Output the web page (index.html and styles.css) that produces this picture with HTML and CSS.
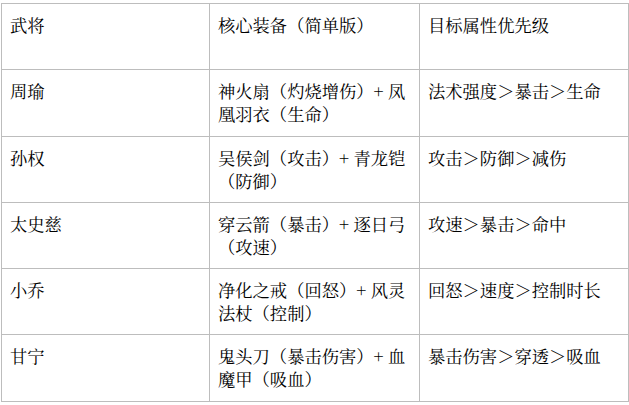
FILE: index.html
```html
<!DOCTYPE html>
<html lang="zh-CN">
<head>
<meta charset="utf-8">
<title>武将装备</title>
<link rel="stylesheet" href="styles.css">
</head>
<body>
<table class="gear">
  <colgroup>
    <col class="c1"><col class="c2"><col class="c3">
  </colgroup>
  <tr><td>武将</td><td>核心装备（简单版）</td><td>目标属性优先级</td></tr>
  <tr><td>周瑜</td><td>神火扇（灼烧增伤）+ 凤凰羽衣（生命）</td><td>法术强度＞暴击＞生命</td></tr>
  <tr><td>孙权</td><td>吴侯剑（攻击）+ 青龙铠（防御）</td><td>攻击＞防御＞减伤</td></tr>
  <tr><td>太史慈</td><td>穿云箭（暴击）+ 逐日弓（攻速）</td><td>攻速＞暴击＞命中</td></tr>
  <tr><td>小乔</td><td>净化之戒（回怒）+ 风灵法杖（控制）</td><td>回怒＞速度＞控制时长</td></tr>
  <tr><td>甘宁</td><td>鬼头刀（暴击伤害）+ 血魔甲（吸血）</td><td>暴击伤害＞穿透＞吸血</td></tr>
</table>
</body>
</html>
```
FILE: styles.css
```css
html, body {
  margin: 0;
  padding: 0;
  background: #ffffff;
}
.gear {
  margin: 3px 0 0 1px;
  width: 627px;
  border-collapse: collapse;
  table-layout: fixed;
  font-family: "Noto Serif CJK SC", "Noto Sans CJK SC", serif;
  font-size: 17.3px;
  line-height: 23px;
  color: #000;
}
.c1 { width: 208px; }
.c2 { width: 210px; }
.c3 { width: 209px; }
.gear td {
  border: 1px solid #bdbdbd;
  padding: 9px 8px;
  height: 47.3px;
  vertical-align: top;
  word-break: normal;
}
```
